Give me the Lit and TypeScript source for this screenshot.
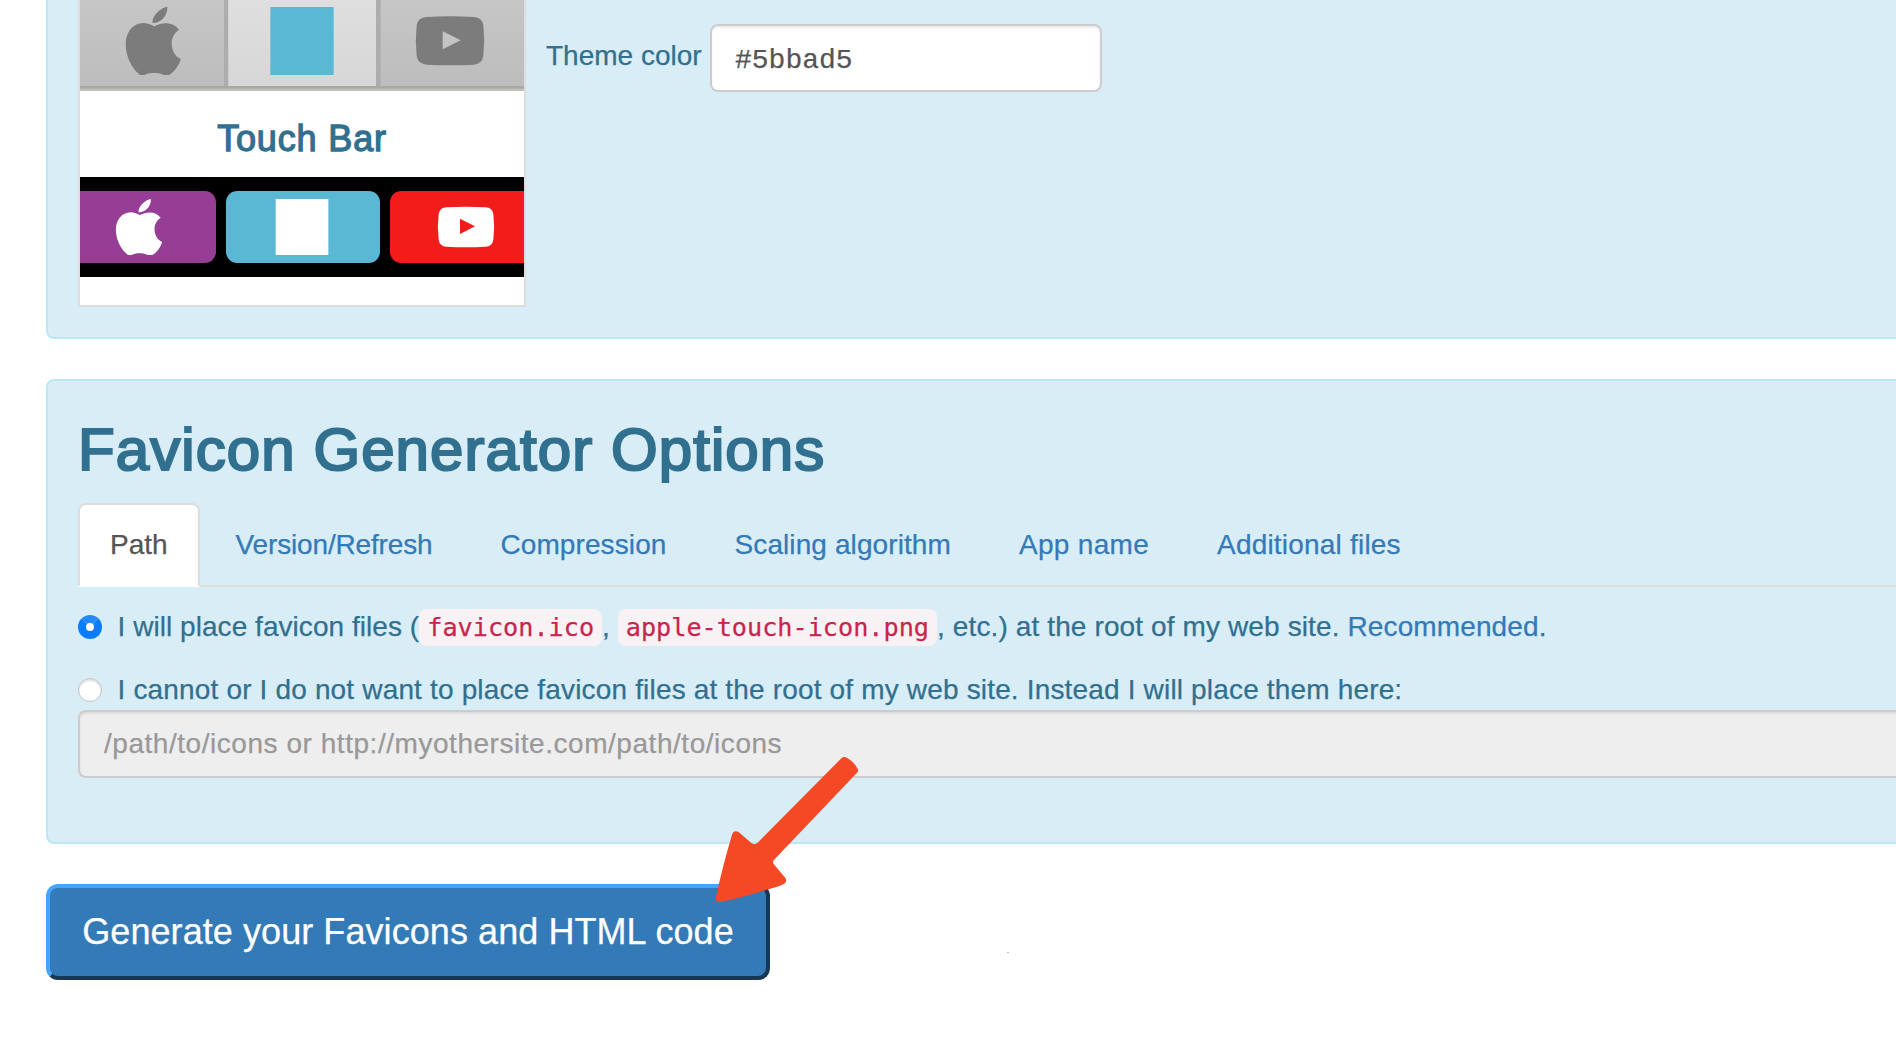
import { LitElement, html, css } from "lit";
import { customElement, property } from "lit/decorators.js";

const applePath =
  "M412 20C396 21 365 46 368 69C391 70 414 47 412 20ZM340 69C308 70 287 98 287 132C287 172 307 207 330 225L344 225C354 217 389 217 400 225L417 225C434 216 448 194 452 177C435 170 425 151 425 130C425 112 434 98 447 89C431 67 400 64 373 79C361 74 352 69 340 69Z";

@customElement("tab-preview")
class TabPreview extends LitElement {
  static styles = css`
    :host { display: block; }
    .art { display: block; width: 444px; height: 91px; }
  `;
  render() {
    return html`<svg class="art" viewBox="150 0 1332 273">
      <defs>
        <linearGradient id="idle" x1="0" y1="0" x2="0" y2="1">
          <stop offset="0" stop-color="#c6c6c6"></stop>
          <stop offset="1" stop-color="#bdbdbd"></stop>
        </linearGradient>
        <linearGradient id="active" x1="0" y1="0" x2="0" y2="1">
          <stop offset="0" stop-color="#dfdfdf"></stop>
          <stop offset="1" stop-color="#d7d7d7"></stop>
        </linearGradient>
      </defs>
      <rect x="150" y="0" width="1332" height="261" fill="url(#idle)"></rect>
      <rect x="582" y="0" width="13" height="261" fill="#adadad"></rect>
      <rect x="595" y="0" width="443" height="258" fill="url(#active)"></rect>
      <rect x="1038" y="0" width="14" height="261" fill="#adadad"></rect>
      <rect x="150" y="258" width="1332" height="9" fill="#a9a9a7"></rect>
      <rect x="150" y="266" width="1332" height="7" fill="#c0c1bb"></rect>
      <path d=${applePath} fill="#7c7c7c"></path>
      <rect x="721" y="21" width="190" height="204" fill="#5bb8d4"></rect>
      <path d="M1190 51Q1261 47 1332 51Q1356 52 1360 76Q1365 122 1360 168Q1356 192 1332 194Q1261 198 1190 194Q1164 192 1160 168Q1155 122 1160 76Q1164 52 1190 51Z" fill="#7c7c7c"></path>
      <path d="M1238 94L1292 121L1238 148Z" fill="#c4c4c4"></path>
    </svg>`;
  }
}

@customElement("touch-bar-preview")
class TouchBarPreview extends LitElement {
  static styles = css`
    :host { display: block; }
    .art { display: block; width: 444px; height: 100px; }
  `;
  render() {
    return html`<svg class="art" viewBox="150 51 1332 300">
      <rect x="150" y="51" width="1332" height="300" fill="#000"></rect>
      <rect x="90" y="93" width="468" height="216" rx="34" fill="#963d96"></rect>
      <rect x="588" y="93" width="462" height="216" rx="34" fill="#5bb8d4"></rect>
      <rect x="1080" y="93" width="460" height="216" rx="34" fill="#f21d1a"></rect>
      <path transform="translate(16.5 100.5) scale(.84 .82)" d=${applePath} fill="#fff"></path>
      <rect x="737" y="117" width="158" height="168" fill="#fff"></rect>
      <path d="M1250 142Q1308 138 1366 142Q1387 143 1390 162Q1395 201 1390 239Q1387 259 1366 260Q1308 264 1250 260Q1229 259 1226 239Q1221 201 1226 162Q1229 143 1250 142Z" fill="#fff"></path>
      <path d="M1290 176L1335 199L1290 222Z" fill="#f21d1a"></path>
    </svg>`;
  }
}

@customElement("option-tabs")
class OptionTabs extends LitElement {
  @property({ attribute: false }) labels: string[] = [];
  static styles = css`
    :host { display: block; }
    .tabs { display: flex; gap: 4px; height: 82px; border-bottom: 2px solid #ddd; }
    .tab {
      box-sizing: border-box; height: 84px; padding: 20px 30px;
      border: 2px solid transparent; border-radius: 8px 8px 0 0;
      color: #337ab7; line-height: 40px; white-space: nowrap; letter-spacing: .1px;
    }
    .active { background: #fff; color: #555; border-color: #ddd; border-bottom-color: #fff; letter-spacing: 0; }
    .tab:nth-child(2) { letter-spacing: -.16px; }
    .tab:nth-child(5) { letter-spacing: .3px; }
    .tab:nth-child(6) { letter-spacing: .2px; }
  `;
  render() {
    return html`<div class="tabs">
      ${this.labels.map((l, i) => html`<div class="tab ${i === 0 ? "active" : ""}">${l}</div>`)}
    </div>`;
  }
}

@customElement("app-root")
class AppRoot extends LitElement {
  static styles = css`
    :host {
      display: block; position: relative; width: 1896px; height: 1042px; overflow: hidden;
      background: #fff; color: #31708f;
      font: 28px/40px "Liberation Sans", Arial, sans-serif;
      -webkit-text-stroke: .25px currentColor;
    }
    .page { padding-left: 46px; }
    .panel {
      box-sizing: border-box; background: #d9edf7; border: 2px solid #bce8f1;
      width: 1900px; border-radius: 8px; padding: 30px;
    }
    .safari { height: 339px; padding-top: 0; border-top: 0; border-radius: 0 0 8px 8px; display: flex; }
    .card { box-sizing: border-box; width: 448px; height: 307px; background: #fff; border: 2px solid #ddd; border-top: 0; }
    .card-title {
      height: 86px; box-sizing: border-box; padding-top: 28px; text-align: center;
      font-size: 36px; line-height: 40px; letter-spacing: .85px; -webkit-text-stroke: 1.3px #31708f;
    }
    .theme { display: flex; align-items: flex-start; padding: 24px 0 0 20px; }
    .theme-label { width: 164px; padding-top: 12px; white-space: nowrap; }
    .field {
      box-sizing: border-box; height: 68px; padding: 12px 24px; border: 2px solid #ccc;
      border-radius: 8px; background: #fff; box-shadow: inset 0 2px 2px rgba(0, 0, 0, .075);
      color: #555;
    }
    .color { width: 392px; padding: 15px 23px 0; font-family: "Liberation Mono", monospace; }
    .options { margin-top: 40px; height: 465px; padding-top: 36px; }
    .heading {
      margin: 0 0 20px; font-size: 60px; line-height: 66px; font-weight: 400;
      letter-spacing: 1.08px; -webkit-text-stroke: 2.2px #31708f; white-space: nowrap;
    }
    .choice { display: flex; align-items: center; height: 40px; white-space: pre; }
    .first { margin-top: 20px; letter-spacing: .05px; }
    .second { margin-top: 23px; letter-spacing: .166px; }
    .text { padding-left: 15.5px; }
    .tail { letter-spacing: .12px; }
    .radio {
      box-sizing: border-box; width: 24px; height: 24px; border-radius: 50%;
      background: #fff; border: 1px solid #bfc3c6; box-shadow: inset 0 2px 2px rgba(0, 0, 0, .12);
    }
    .checked { border: 8px solid #0a7dff; border-top-color: #2389fc; box-shadow: none; }
    .code {
      font: 25.2px/30px "DejaVu Sans Mono", monospace; color: #c7254e; background: #f9f2f4;
      padding: 4px 8px; border-radius: 8px; letter-spacing: 0;
    }
    .link { color: #337ab7; }
    .path { background: #eee; color: #999; letter-spacing: .54px; }
    .generate {
      box-sizing: border-box; width: 724px; height: 96px; margin-top: 40px; padding: 20px 0;
      border: 4px solid; border-color: #47a4fb #173753 #173753 #47a4fb; border-radius: 12px;
      background: #337ab7; color: #fff; text-align: center; font-size: 36px; line-height: 48px;
      letter-spacing: .07px;
    }
    .arrow { position: absolute; left: 680px; top: 740px; width: 200px; height: 180px; }
    .speck { position: absolute; left: 1007px; top: 952px; width: 2px; height: 1px; background: #f3b3a8; }
  `;
  render() {
    return html`
      <div class="page">
        <section class="panel safari">
          <div class="card">
            <tab-preview></tab-preview>
            <div class="card-title">Touch Bar</div>
            <touch-bar-preview></touch-bar-preview>
          </div>
          <div class="theme">
            <div class="theme-label">Theme color</div>
            <div class="field color">#5bbad5</div>
          </div>
        </section>
        <section class="panel options">
          <h1 class="heading">Favicon Generator Options</h1>
          <option-tabs .labels=${["Path", "Version/Refresh", "Compression", "Scaling algorithm", "App name", "Additional files"]}></option-tabs>
          <div class="choice first"><span class="radio checked"></span><span class="text">I will place favicon files (<span class="code">favicon.ico</span>, <span class="code">apple-touch-icon.png</span><span class="tail">, etc.) at the root of my web site. <span class="link">Recommended</span>.</span></span></div>
          <div class="choice second"><span class="radio"></span><span class="text">I cannot or I do not want to place favicon files at the root of my web site. Instead I will place them here:</span></div>
          <div class="field path">/path/to/icons or http://myothersite.com/path/to/icons</div>
        </section>
        <div class="generate">Generate your Favicons and HTML code</div>
      </div>
      <svg class="arrow" viewBox="0 0 600 540">
        <path fill="#f54824" d="M485 54Q492 48 502 54Q523 67 533 86Q536 92 531 98L281 361Q277 366 281 372L316 414Q322 424 313 431Q300 438 260 449Q180 475 122 486Q106 487 108 472Q124 392 156 284Q160 270 175 275L214 309Q223 316 232 309Z"></path>
      </svg>
      <div class="speck"></div>
    `;
  }
}
